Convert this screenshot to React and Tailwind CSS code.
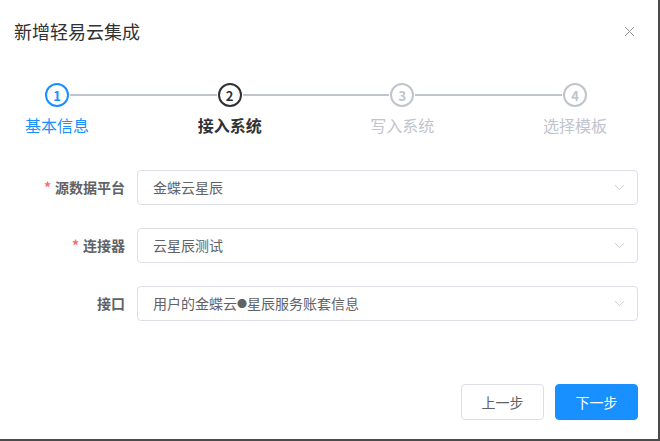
import React from "react";
import { ChevronDown, X } from "lucide-react";

const steps = [
  { num: 1, label: "基本信息", state: "done" },
  { num: 2, label: "接入系统", state: "active" },
  { num: 3, label: "写入系统", state: "wait" },
  { num: 4, label: "选择模板", state: "wait" },
];

const fields = [
  { label: "源数据平台", value: "金蝶云星辰", required: true },
  { label: "连接器", value: "云星辰测试", required: true },
  {
    label: "接口",
    value: (
      <>
        用户的金蝶云<span className="text-[10px] align-[1px]">●</span>星辰服务账套信息
      </>
    ),
    required: false,
  },
];

function Step({ num, label, state }) {
  const circle =
    state === "done"
      ? "border-[#1890ff] text-[#1890ff]"
      : state === "active"
      ? "border-[#303133] text-[#303133]"
      : "border-[#c0c4cc] text-[#c0c4cc]";
  const text =
    state === "done"
      ? "text-[#1890ff]"
      : state === "active"
      ? "text-[#303133] font-bold"
      : "text-[#c0c4cc]";
  return (
    <div className="relative z-10 flex w-[80px] flex-col items-center">
      <div className="bg-white px-[1px]">
        <div
          className={`flex h-[24px] w-[24px] items-center justify-center rounded-full border-2 bg-white text-[13px] font-bold leading-none ${circle}`}
        >
          {num}
        </div>
      </div>
      <div className={`mt-[6px] text-[16px] leading-[24px] ${text}`}>{label}</div>
    </div>
  );
}

export default function App() {
  return (
    <div
      className="flex h-[441px] w-[660px] bg-[#4b4b4b]"
      style={{ fontFamily: '"Noto Sans CJK SC", "Noto Sans", sans-serif' }}
    >
      <div className="flex h-[439px] w-[658px] flex-col bg-white">
        {/* header */}
        <div className="flex items-center justify-between pl-[14px] pr-[20px] pt-[19px]">
          <span className="text-[18px] leading-[24px] text-[#303133]">新增轻易云集成</span>
          <X size={17} strokeWidth={1.4} className="text-[#909399]" />
        </div>

        {/* steps */}
        <div className="relative mx-[17px] mt-[40px] flex justify-between w-[598px]">
          <div className="absolute left-[40px] right-[40px] top-[11px] h-[2px] bg-[#c0c4cc]" />
          {steps.map((s) => (
            <Step key={s.num} {...s} />
          ))}
        </div>

        {/* form */}
        <div className="mt-[33px] flex flex-col gap-[23px] pl-[14px] pr-[20px]">
          {fields.map((f) => (
            <div key={f.label} className="flex items-center gap-[12px]">
              <label className="w-[111px] text-right text-[14px] font-bold text-[#606266]">
                {f.required && <span className="mr-[4px] text-[#f56c6c]">*</span>}
                {f.label}
              </label>
              <div className="flex h-[35px] flex-1 items-center justify-between rounded-[4px] border border-[#dcdfe6] pl-[15px] pr-[9px]">
                <span className="text-[14px] text-[#606266]">{f.value}</span>
                <ChevronDown size={17} strokeWidth={1.2} className="text-[#c0c4cc]" />
              </div>
            </div>
          ))}
        </div>

        {/* footer */}
        <div className="mt-auto mb-[19px] flex justify-end gap-[11px] pr-[20px]">
          <button className="h-[36px] w-[83px] rounded-[4px] border border-[#dcdfe6] bg-white text-[14px] text-[#606266]">
            上一步
          </button>
          <button className="h-[36px] w-[83px] rounded-[4px] border border-[#1890ff] bg-[#1890ff] text-[14px] text-white">
            下一步
          </button>
        </div>
      </div>
    </div>
  );
}
